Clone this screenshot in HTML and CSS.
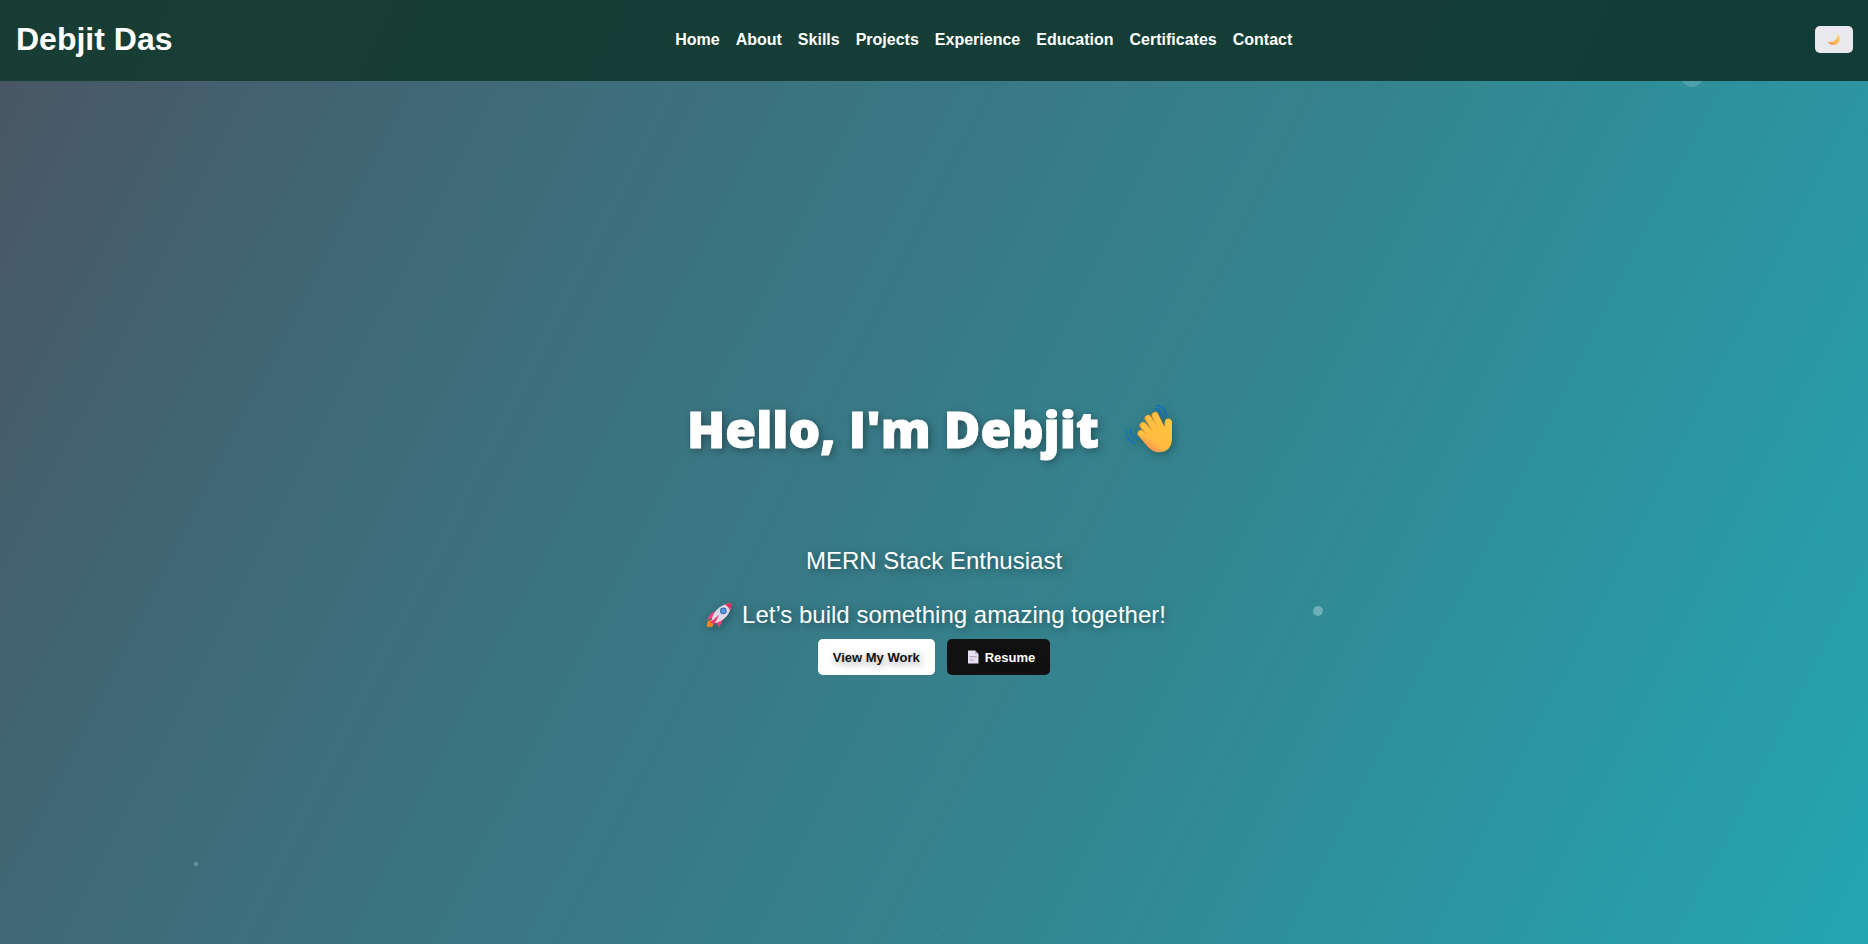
FILE: index.html
```
<!DOCTYPE html>
<html lang="en">
<head>
<meta charset="utf-8">
<meta name="viewport" content="width=device-width, initial-scale=1">
<title>Debjit Das</title>
<link rel="stylesheet" href="styles.css">
</head>
<body>
<header class="navbar">
  <div class="logo">Debjit Das</div>
  <nav class="nav-links" aria-label="Main">
    <a href="#home">Home</a>
    <a href="#about">About</a>
    <a href="#skills">Skills</a>
    <a href="#projects">Projects</a>
    <a href="#experience">Experience</a>
    <a href="#education">Education</a>
    <a href="#certificates">Certificates</a>
    <a href="#contact">Contact</a>
  </nav>
  <button class="theme-toggle" type="button" aria-label="Toggle dark mode">
    <svg class="moon" viewBox="0 0 14 14" aria-hidden="true">
      <defs><linearGradient id="moonFill" x1="1" y1="0" x2="0" y2="1"><stop offset="0" stop-color="#ffd76a"/><stop offset=".55" stop-color="#fbbd5c"/><stop offset="1" stop-color="#f0895a"/></linearGradient></defs>
      <path d="M10.400 1C12.800 2.600 13.900 5.100 13.200 7.700C12.300 11.100 9 13.300 5.500 12.900C3.300 12.700 1.500 11.500.5 9.600C3.600 10.100 6.600 9.500 8.600 7.400C10.400 5.600 10.900 3.300 10.400 1Z" fill="url(#moonFill)"/>
      <circle cx="10" cy="9" r=".9" fill="#f3a54d"/><circle cx="5" cy="11.300" r=".6" fill="#e8924c"/>
    </svg>
  </button>
</header>

<main class="hero" id="home">
  <span class="particle particle-large"></span>
  <span class="particle particle-medium"></span>
  <span class="particle particle-small"></span>
  <span class="particle particle-tiny"></span>

  <h1 class="title">
    <span>Hello, I'm Debjit</span>
    <svg class="wave" viewBox="0 0 48 50" role="img" aria-label="Waving hand">
      <defs>
        <linearGradient id="hand" gradientUnits="userSpaceOnUse" x1="38" y1="20" x2="20" y2="46"><stop offset="0" stop-color="#ffc23c"/><stop offset=".6" stop-color="#ffbb40"/><stop offset="1" stop-color="#f58b5b"/></linearGradient>
      </defs>
      <g fill="none" stroke="#0e6fc4" stroke-width="1.400" stroke-linecap="round">
        <path d="M32 1.500C37 2 41 6 41.500 11.500"/>
        <path d="M31 5C35 6 37 8.500 37.500 13"/>
        <path d="M1.500 26C.5 31 4 37.500 9.500 39"/>
        <path d="M5.500 25C5 29.500 8 34 12.500 35.500"/>
      </g>
      <g stroke="#e9962f" stroke-width="7" stroke-linecap="round" fill="none">
        <path d="M16 29.500 29 39"/><path d="M18 21.500 31 35"/><path d="M23 14.500 34 31"/><path d="M30 11.500 38 27"/>
      </g>
      <g stroke="#ffc044" stroke-width="6" stroke-linecap="round" fill="none">
        <path d="M16 29.500 29 40"/><path d="M18.500 21.500 31 36"/><path d="M23.500 14.500 34 31"/><path d="M30.300 11.500 38 27"/>
      </g>
      <path d="M38.500 26C40.200 24 39.300 20.500 39.800 17.500C40.600 13 47 13.500 47 18.500V35C47 43 41.500 48.300 34.500 48.300C29.500 48.300 26 46 22.500 42.500L14 32.500 20 29.500 27 26 33 23Z" fill="url(#hand)"/>
    </svg>
  </h1>

  <p class="tagline">MERN Stack Enthusiast</p>
  <p class="tagline tagline-icon">
    <svg class="rocket" viewBox="0 0 26 26" aria-hidden="true">
      <path d="M2.500 18.500 6.500 18 8 21 6.500 24.500C4.500 25.300 2.300 25 1 25C.8 22.700 1 20 2.500 18.500Z" fill="#f58220"/>
      <path d="M9.500 9.500C6 10 2.500 13.500 1.500 18L8 15.500ZM17 16.500C16.500 20 14 23.500 13 25.500L9.500 19.500Z" fill="#ef4477"/>
      <path d="M5.500 19C6.500 10.500 13 3 23 1.500C25 1.300 25.500 2 25.200 4C23.500 14 16.500 19.500 8 21.500Z" fill="#ded9e6"/>
      <path d="M18.500 2.800C21 1.500 23 1 24.500 1.200C25.600 1.400 25.600 3 25.300 4C25 5.700 24.500 7 23.800 8.300C23 5.500 21 3.500 18.500 2.800Z" fill="#e9285a"/>
      <path d="M4 20.500 13.500 12.500 8 22.500Z" fill="#e83870"/>
      <circle cx="17.300" cy="8.900" r="3.300" fill="#416ea8"/><circle cx="17.300" cy="8.900" r="2.200" fill="#4e9cef"/>
    </svg>
    <span>Let’s build something amazing together!</span>
  </p>

  <div class="actions">
    <a class="btn btn-light" href="#projects">View My Work</a>
    <a class="btn btn-dark" href="#resume">
      <svg class="page" viewBox="0 0 12 14" aria-hidden="true">
        <path d="M1 .5H8L11.500 4V13.500H1Z" fill="#e8dff2"/><path d="M8 .5 11.500 4H8Z" fill="#b5a9c6"/>
        <path d="M2.700 6.700H9.700M2.700 10H7" stroke="#aaa0b7" stroke-width="1"/>
      </svg>
      <span>Resume</span>
    </a>
  </div>
</main>
</body>
</html>
```
FILE: styles.css
```
* {
  box-sizing: border-box;
}

body {
  margin: 0;
  min-height: 100vh;
  display: flex;
  flex-direction: column;
  font-family: Arial, "Liberation Sans", sans-serif;
  color: #fff;
  background: linear-gradient(117deg, #4a5562 0%, #416674 18%, #3a7683 40%, #34838e 60%, #24a5b2 100%);
}

.navbar {
  position: relative;
  z-index: 1;
  display: flex;
  align-items: center;
  justify-content: space-between;
  padding: 21px 15px 23px 16px;
  background: linear-gradient(117deg, #183d34, #163e36 50%, #113c37);
}

.logo {
  font-size: 32px;
  font-weight: bold;
  line-height: 37px;
}

.nav-links {
  display: flex;
  gap: 16px;
  margin-right: 20px;
}

.nav-links a {
  color: #fff;
  font-size: 16px;
  font-weight: bold;
  text-decoration: none;
}

.theme-toggle {
  display: flex;
  align-items: center;
  justify-content: center;
  padding: 7px 12px;
  border: 0;
  border-radius: 5px;
  background: #e9e9ed;
}

.moon {
  width: 14px;
  height: 13px;
}

.hero {
  position: relative;
  flex: 1;
  display: flex;
  flex-direction: column;
  align-items: center;
  justify-content: center;
  padding: 45px 16px 0;
  text-shadow: 2px 2px 8px rgba(0, 0, 0, 0.4);
}

.title {
  display: flex;
  align-items: center;
  gap: 26px;
  margin: 0 0 84px;
  padding-right: 8px;
  font-family: "Arial Black", "Open Sans", sans-serif;
  font-size: 50px;
  font-weight: 900;
  line-height: 68px;
  -webkit-text-stroke: 1px #fff;
}

.wave {
  width: 48px;
  height: 50px;
  filter: drop-shadow(2px 2px 4px rgba(0, 0, 0, 0.3));
}

.tagline {
  margin: 0 0 26px;
  font-size: 24px;
  line-height: 28px;
}

.tagline-icon {
  display: flex;
  align-items: center;
  gap: 10px;
  margin-bottom: 10px;
  padding-left: 4px;
}

.rocket {
  width: 26px;
  height: 26px;
  filter: drop-shadow(2px 2px 4px rgba(0, 0, 0, 0.3));
}

.actions {
  display: flex;
  gap: 12px;
}

.btn {
  display: flex;
  align-items: center;
  gap: 6px;
  height: 36px;
  padding: 0 15px;
  border-radius: 5px;
  font-size: 13px;
  font-weight: bold;
  text-decoration: none;
}

.btn-light {
  color: #111;
  background: #fff;
}

.btn-dark {
  padding-left: 20px;
  color: #fff;
  background: #111;
}

.page {
  width: 12px;
  height: 14px;
}

.particle {
  position: absolute;
  border-radius: 50%;
  background: rgba(255, 255, 255, 0.3);
}

.particle-large {
  top: -16px;
  left: 90%;
  width: 22px;
  height: 22px;
  background: rgba(255, 255, 255, 0.15);
}

.particle-medium {
  bottom: 38%;
  left: 70.3%;
  width: 10px;
  height: 10px;
}

.particle-small {
  bottom: 9%;
  left: 10.400%;
  width: 4px;
  height: 4px;
  background: rgba(255, 255, 255, 0.25);
}

.particle-tiny {
  bottom: 1.700%;
  left: 50.500%;
  width: 2px;
  height: 2px;
  background: rgba(255, 255, 255, 0.2);
}
```
